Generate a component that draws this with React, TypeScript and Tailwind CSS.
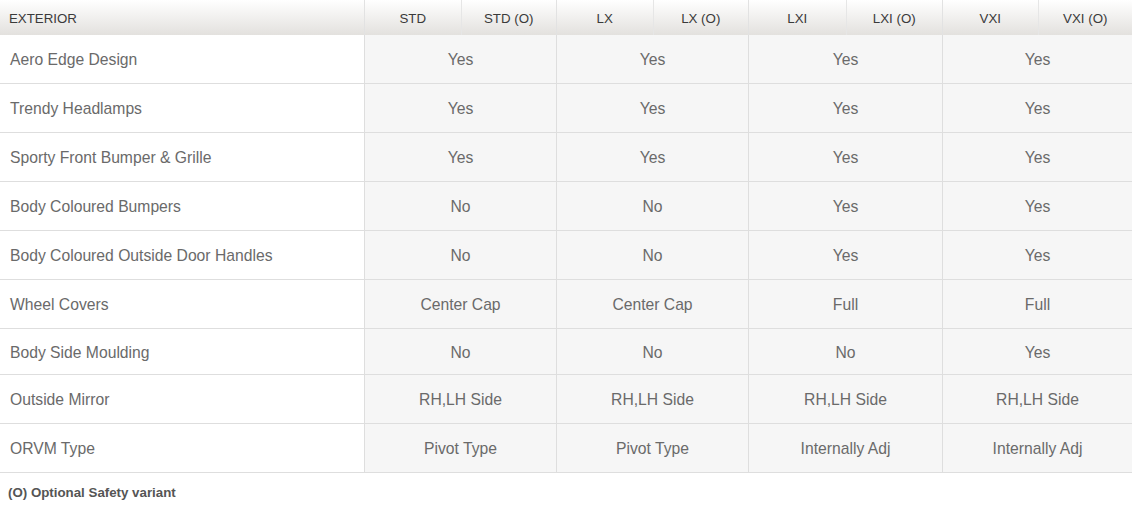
const variants = ["STD", "STD (O)", "LX", "LX (O)", "LXI", "LXI (O)", "VXI", "VXI (O)"];

const rows: { label: string; values: string[]; h?: string }[] = [
  { label: "Aero Edge Design", values: ["Yes", "Yes", "Yes", "Yes"] },
  { label: "Trendy Headlamps", values: ["Yes", "Yes", "Yes", "Yes"] },
  { label: "Sporty Front Bumper & Grille", values: ["Yes", "Yes", "Yes", "Yes"] },
  { label: "Body Coloured Bumpers", values: ["No", "No", "Yes", "Yes"] },
  { label: "Body Coloured Outside Door Handles", values: ["No", "No", "Yes", "Yes"] },
  { label: "Wheel Covers", values: ["Center Cap", "Center Cap", "Full", "Full"] },
  { label: "Body Side Moulding", values: ["No", "No", "No", "Yes"], h: "h-[46px]" },
  { label: "Outside Mirror", values: ["RH,LH Side", "RH,LH Side", "RH,LH Side", "RH,LH Side"] },
  { label: "ORVM Type", values: ["Pivot Type", "Pivot Type", "Internally Adj", "Internally Adj"] },
];

const cols = "grid grid-cols-[364px_192px_192px_194px_190px]";

export default function App() {
  return (
    <div className="w-[1132px] h-[510px] bg-white font-['Liberation_Sans',Arial,sans-serif]">
      <div className={cols + " h-[35px] pt-[2px] bg-gradient-to-b from-white to-[#e3e1de] text-[13.3px] text-[#3a3a3a]"}>
        <div className="flex items-center pl-[9px]">EXTERIOR</div>
        {[0, 1, 2, 3].map((i) => (
          <div key={i} className="grid grid-cols-2 border-l border-[#e2e2e2] -mt-[2px]">
            <div className="flex items-center justify-center pt-[2px]">{variants[i * 2]}</div>
            <div className="flex items-center justify-center pt-[2px] border-l border-[#e6e6e6]">{variants[i * 2 + 1]}</div>
          </div>
        ))}
      </div>
      {rows.map((r) => (
        <div key={r.label} className={cols + " border-b border-[#dedede] text-[15.7px] text-[#6a6a6a] " + (r.h ?? "h-[49px]")}>
          <div className="flex items-center pl-[10px] pt-[2px] bg-white">{r.label}</div>
          {r.values.map((v, i) => (
            <div key={i} className="flex items-center justify-center pt-[2px] bg-[#f6f6f6] border-l border-[#dedede]">
              {v}
            </div>
          ))}
        </div>
      ))}
      <div className="pl-[8px] pt-[10px] text-[13.3px] font-bold text-[#555]">(O) Optional Safety variant</div>
    </div>
  );
}
